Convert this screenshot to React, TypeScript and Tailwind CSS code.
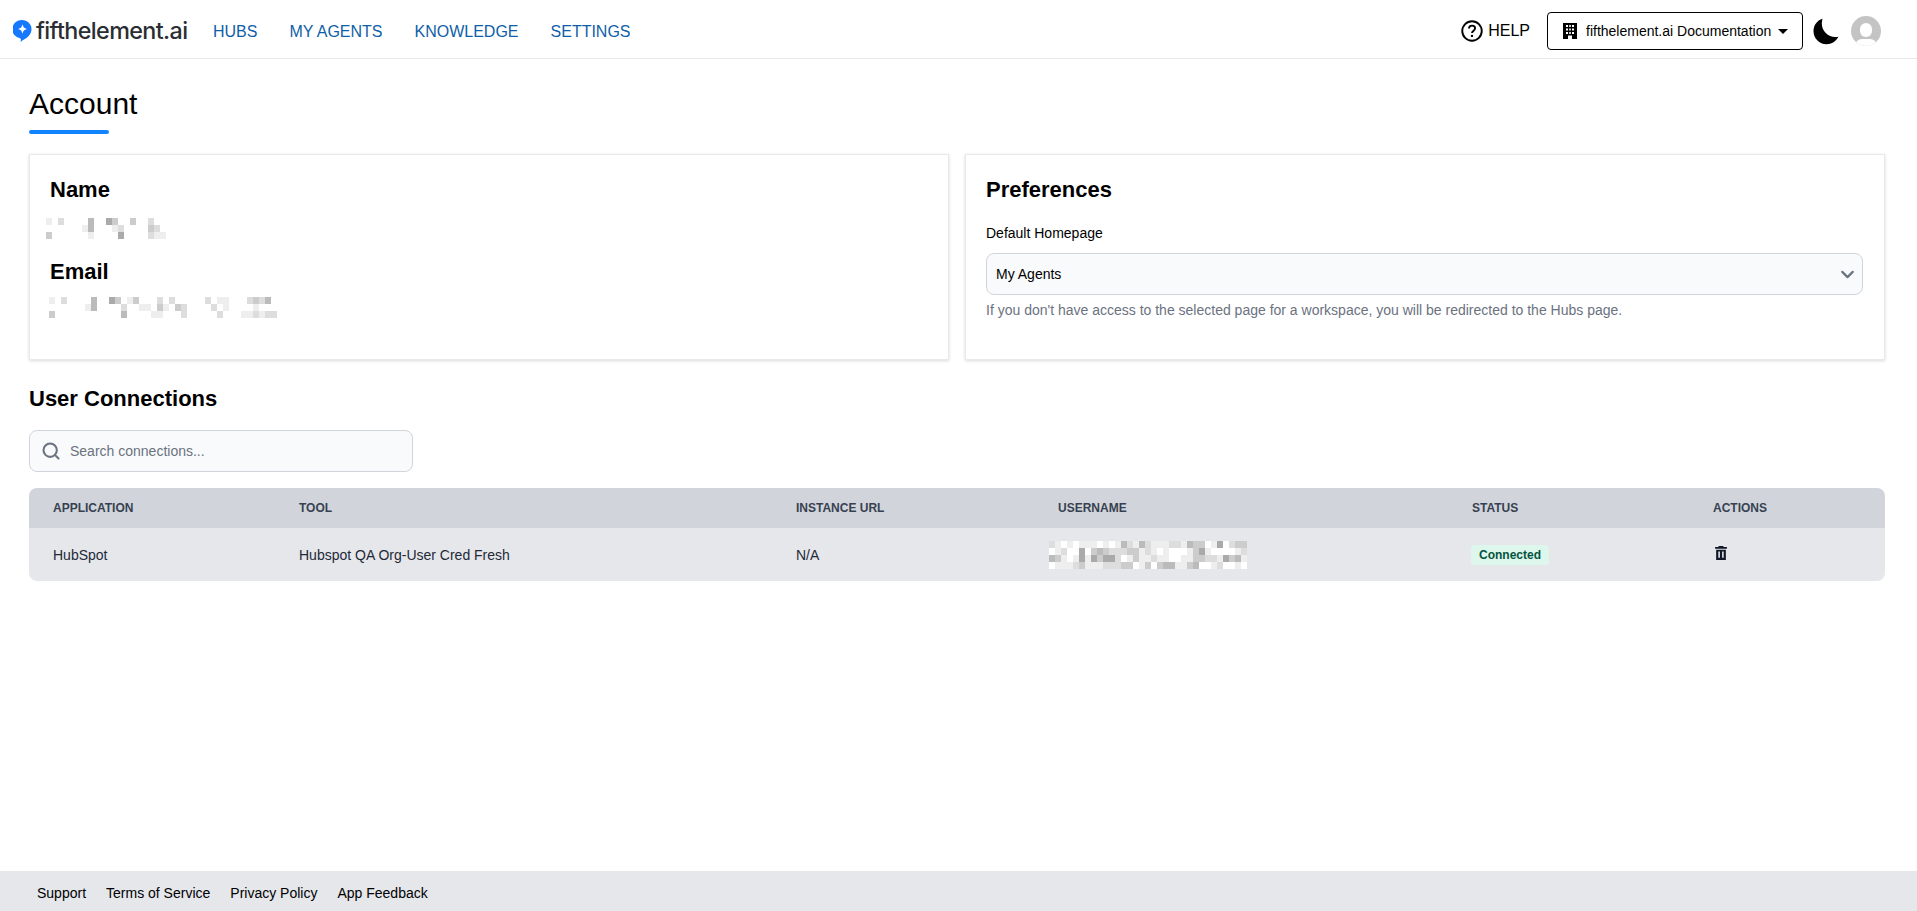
import { ChevronDown, Search } from 'lucide-react';

// pixelated (redacted) text, one hex digit per cell = grey level, '.' = clear
function Redacted({ rows, className }: { rows: string[]; className?: string }) {
  const cw = 6;
  const ch = 7;
  const w = rows[0].length * cw;
  const h = rows.length * ch;
  return (
    <svg width={w} height={h} viewBox={`0 0 ${w} ${h}`} className={className} shapeRendering="crispEdges">
      {rows.map((row, y) =>
        row.split('').map((c, x) =>
          c === '.' ? null : <rect key={`${x}-${y}`} x={x * cw} y={y * ch} width={cw} height={ch} fill={`#${c}${c}${c}`} />,
        ),
      )}
    </svg>
  );
}

const NAME_ROWS = [
  'e.df...bf.ac.fcffd..',
  '......eb...edffffcd.',
  'c......e.f..af.f.dee',
];
const EMAIL_ROWS = [
  'e.df...bf.ac.ecfffdfd..ff.dfee...dcdb.',
  '......eb...fdffeefcefcd...fdfef..fe.f.',
  'c......f.f..bf.f.eef..d....fd...eededd',
];
const USER_ROWS = [
  'defefeeefefebdebdeeeddebccfeafdcc',
  'fedffafcbcdddccedefefffecaeffffed',
  'bcefeaeacaadfeceedeeffeeccddeacbe',
  'feeedceeedddccfecfcbbeecbffedffef',
];

function BuildingIcon() {
  return (
    <svg width="14" height="16" viewBox="0 0 14 16" fill="currentColor">
      <path
        fillRule="evenodd"
        d="M0 0h14v16H9v-3.500H5V16H0V0zM3 2v2h2V2H3zm3.200 0v2h1.600V2H6.200zM9 2v2h2V2H9zM3 5.500v2h2v-2H3zm3.200 0v2h1.600v-2H6.200zM9 5.500v2h2v-2H9zM3 9v2h2V9H3zm3.200 0v2h1.600V9H6.200zM9 9v2h2V9H9z"
      />
    </svg>
  );
}

function TrashIcon({ className }: { className?: string }) {
  return (
    <svg width="12" height="14" viewBox="0 0 11 13" className={className} fill="#111827">
      <path d="M3.500 0h4l.6 1H11v1.500H0V1h2.900z" />
      <path fillRule="evenodd" d="M1 3.500h9V13H1V3.500zM3 5v6h1.500V5H3zm3.500 0v6H8V5H6.500z" />
    </svg>
  );
}

function Card({ children }: { children: React.ReactNode }) {
  return <div className="flex-1 h-[206px] bg-white border border-[#e8e9eb] shadow-[0_1px_3px_rgba(0,0,0,0.15)] pl-[20px] pr-[21px] pt-[21px]">{children}</div>;
}

export default function App() {
  return (
    <div className="h-[911px] flex flex-col bg-white text-black font-['Liberation_Sans',Arial,sans-serif] overflow-hidden">
      {/* Header */}
      <header className="h-[59px] shrink-0 flex items-center border-b border-[#e8e9eb] pt-[4px] pl-[13px] pr-[36px]">
        <div className="flex items-center w-[200px]">
          <svg width="19" height="22" viewBox="0 0 20 23" className="mr-[4px]">
            <path d="M10 0a9.500 9.500 0 0 1 9.500 9.500c0 5-3.400 8.400-7 10.500-1.500.9-3.200 1.800-4.500 3 .2-1.500.4-2.800 0-3.700A9.500 9.500 0 0 1 10 0z" fill="#1677ff" />
            <path d="M10 4.500c.6 3 1.700 4.200 4.600 5-2.900.8-4 2-4.600 5-.6-3-1.700-4.200-4.600-5 2.900-.8 4-2 4.600-5z" fill="#fff" />
          </svg>
          <span className="font-['Inter',sans-serif] font-medium text-[23.300px] tracking-[-0.6px] leading-none text-[#2a2e33]">fifthelement.ai</span>
        </div>
        <nav className="flex gap-8 mt-[2px] text-base text-[#0f5ea8]">
          <span>HUBS</span>
          <span>MY AGENTS</span>
          <span>KNOWLEDGE</span>
          <span>SETTINGS</span>
        </nav>
        <div className="ml-auto flex items-center">
          <svg width="22" height="22" viewBox="0 0 22 22" fill="none" stroke="currentColor" className="mr-[5px]">
            <circle cx="11" cy="11" r="9.750" strokeWidth="1.900" />
            <path d="M8 8.600c0-1.800 1.400-3 3.100-3 1.700 0 3 1.100 3 2.700 0 2.400-3.100 2.300-3.100 4.800" strokeWidth="1.900" />
            <circle cx="11" cy="15.900" r="1.200" fill="currentColor" stroke="none" />
          </svg>
          <span className="text-base mr-[17px]">HELP</span>
          <div className="h-[38px] w-[256px] flex items-center border border-black rounded-[4px] pl-[15px] text-sm">
            <BuildingIcon />
            <span className="ml-[9px]">fifthelement.ai Documentation</span>
            <span className="ml-[7px] w-0 h-0 border-x-[5px] border-x-transparent border-t-[5px] border-t-black" />
          </div>
          <svg width="26" height="27" viewBox="0 0 26 27" className="ml-[10px]">
            <path d="M9.500.8C4 2.500.5 7.400.5 13c0 7.300 5.800 13.200 13 13.200 5.200 0 9.800-3 11.900-7.500-1 .2-2 .4-3 .4-7.500 0-13.600-6.100-13.600-13.500 0-1.600.3-3.200.7-4.800z" fill="#000" />
          </svg>
          <div className="ml-[12px] w-[30px] h-[30px] rounded-full bg-[#c4c4c4] overflow-hidden relative">
            <div className="absolute left-[9px] top-[7px] w-[12px] h-[14px] rounded-full bg-white" />
            <div className="absolute left-[4px] top-[23px] w-[22px] h-[14px] rounded-full bg-white" />
          </div>
        </div>
      </header>

      {/* Main */}
      <main className="flex-1 pl-[29px] pr-[32px] pt-[27px]">
        <h1 className="text-[30px] leading-[36px]">Account</h1>
        <div className="mt-[8px] w-[80px] h-[4px] rounded-sm bg-[#1384ff]" />

        <div className="mt-[20px] flex gap-4">
          <Card>
            <h2 className="text-[22px] font-bold leading-[28px]">Name</h2>
            <Redacted rows={NAME_ROWS} className="-ml-[4px] mt-[14px]" />
            <h2 className="text-[22px] font-bold leading-[28px] mt-[19px]">Email</h2>
            <Redacted rows={EMAIL_ROWS} className="-ml-[1px] mt-[11px]" />
          </Card>
          <Card>
            <h2 className="text-[22px] font-bold leading-[28px]">Preferences</h2>
            <div className="text-sm leading-5 mt-[19px]">Default Homepage</div>
            <div className="mt-[10px] h-[42px] flex items-center justify-between bg-[#f9fafb] border border-[#d1d5db] rounded-lg pl-[9px] pr-[4px] text-sm">
              <span>My Agents</span>
              <ChevronDown size={21} strokeWidth={2.500} className="text-[#6b7280]" />
            </div>
            <p className="mt-[5px] text-sm leading-5 text-[#6b7280]">
              If you don't have access to the selected page for a workspace, you will be redirected to the Hubs page.
            </p>
          </Card>
        </div>

        <h2 className="mt-[25px] text-[22px] font-bold leading-[28px]">User Connections</h2>

        <div className="mt-[17px] w-[384px] h-[42px] flex items-center bg-[#f9fafb] border border-[#d1d5db] rounded-lg pl-[11px] text-sm text-[#6b7280]">
          <Search size={20} strokeWidth={2.500} className="text-[#6b7280]" />
          <span className="ml-[9px]">Search connections...</span>
        </div>

        {/* Connections table */}
        <div className="mt-[16px] rounded-lg overflow-hidden">
          <div className="h-[40px] grid grid-cols-[246px_497px_262px_414px_241px_1fr] items-center bg-[#d1d5db] pl-6 text-xs font-bold text-[#374151]">
            <span>APPLICATION</span>
            <span>TOOL</span>
            <span>INSTANCE URL</span>
            <span>USERNAME</span>
            <span>STATUS</span>
            <span>ACTIONS</span>
          </div>
          <div className="h-[53px] grid grid-cols-[246px_497px_262px_414px_241px_1fr] items-center bg-[#e5e7eb] pl-6 text-sm text-[#1f2937]">
            <span>HubSpot</span>
            <span>Hubspot QA Org-User Cred Fresh</span>
            <span>N/A</span>
            <Redacted rows={USER_ROWS} className="-ml-[9px]" />
            <span className="-ml-[1px] justify-self-start rounded-[4px] bg-[#def7ec] px-[8px] py-[1px] text-xs font-bold leading-[18px] text-[#03543f]">Connected</span>
            <TrashIcon className="ml-[2px] -mt-[4px]" />
          </div>
        </div>
      </main>

      {/* Footer */}
      <footer className="h-[40px] shrink-0 flex items-center gap-5 bg-[#e5e7eb] pt-[4px] pl-[37px] text-sm">
        <span>Support</span>
        <span>Terms of Service</span>
        <span>Privacy Policy</span>
        <span>App Feedback</span>
      </footer>
    </div>
  );
}
